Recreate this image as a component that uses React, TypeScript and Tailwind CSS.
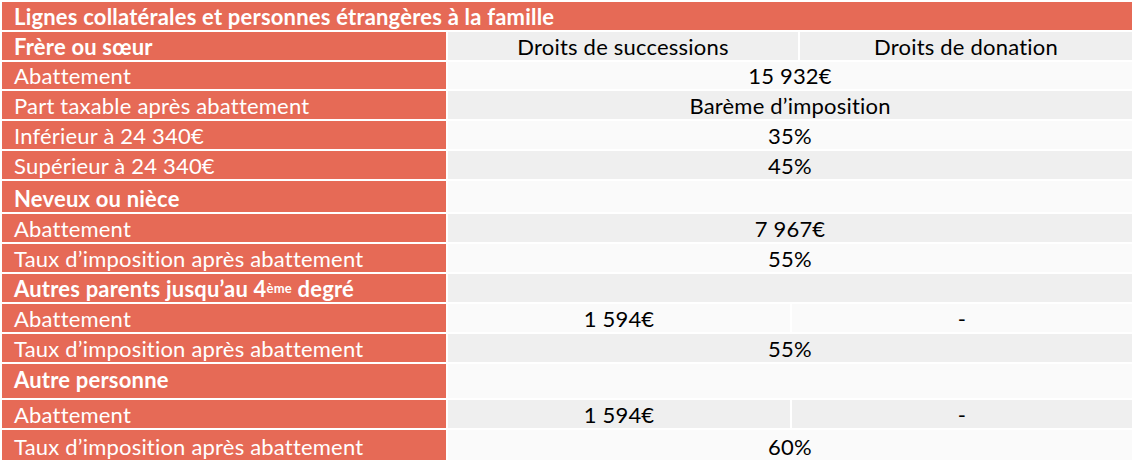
import React from "react";

type Row = {
  label: React.ReactNode;
  bold?: boolean;
  h: number;
  pb?: string;
  cells: { text?: React.ReactNode; w?: string }[];
  bg: string;
};

const G = "bg-[#efefef]";
const L = "bg-[#fafafa]";

const rows: Row[] = [
  {
    label: "Frère ou sœur",
    bold: true,
    h: 28,
    bg: G,
    cells: [
      { text: "Droits de successions", w: "w-[350px]" },
      { text: "Droits de donation", w: "flex-1" },
    ],
  },
  { label: "Abattement", h: 27, bg: L, cells: [{ text: "15 932€", w: "flex-1" }] },
  { label: "Part taxable après abattement", h: 28, bg: G, cells: [{ text: "Barème d’imposition", w: "flex-1" }] },
  { label: "Inférieur à 24 340€", h: 28, bg: L, cells: [{ text: "35%", w: "flex-1" }] },
  { label: "Supérieur à 24 340€", h: 28, bg: G, cells: [{ text: "45%", w: "flex-1" }] },
  { label: "Neveux ou nièce", bold: true, h: 31, bg: L, cells: [{ text: "", w: "flex-1" }] },
  { label: "Abattement", h: 28, bg: G, cells: [{ text: "7 967€", w: "flex-1" }] },
  { label: "Taux d’imposition après abattement", h: 28, bg: L, cells: [{ text: "55%", w: "flex-1" }] },
  {
    label: (
      <>
        Autres parents jusqu’au 4<sup className="text-[13px] relative -top-[4px]">ème</sup> degré
      </>
    ),
    bold: true,
    h: 28,
    bg: G,
    cells: [{ text: "", w: "flex-1" }],
  },
  {
    label: "Abattement",
    h: 28,
    bg: L,
    cells: [
      { text: "1 594€", w: "w-[342px]" },
      { text: "-", w: "flex-1" },
    ],
  },
  { label: "Taux d’imposition après abattement", h: 28, bg: G, cells: [{ text: "55%", w: "flex-1" }] },
  { label: "Autre personne", bold: true, h: 34, pb: "pb-[6px]", bg: L, cells: [{ text: "", w: "flex-1" }] },
  {
    label: "Abattement",
    h: 28,
    bg: G,
    cells: [
      { text: "1 594€", w: "w-[342px]" },
      { text: "-", w: "flex-1" },
    ],
  },
  { label: "Taux d’imposition après abattement", h: 30, bg: L, cells: [{ text: "60%", w: "flex-1" }] },
];

export default function App() {
  return (
    <div
      className="w-[1136px] h-[460px] overflow-hidden bg-white pt-[2px] pl-[2px]"
      style={{ fontFamily: "Lato, 'Open Sans', sans-serif" }}
    >
      <div className="w-[1130px] flex flex-col gap-[2px] text-[22px] tracking-[0.2px]">
        <div className="h-[28px] bg-[#e66a56] text-white font-bold flex items-end pl-[12px] pb-[1px] leading-[24px]">
          Lignes collatérales et personnes étrangères à la famille
        </div>
        {rows.map((r, i) => (
          <div key={i} className="flex gap-[2px]" style={{ height: r.h }}>
            <div
              className={`w-[444px] shrink-0 bg-[#e66a56] text-white flex items-end pl-[12px] leading-[24px] ${
                r.pb ?? "pb-[1px]"
              } ${r.bold ? "font-bold" : ""}`}
            >
              <span className="whitespace-nowrap">{r.label}</span>
            </div>
            {r.cells.map((c, j) => (
              <div
                key={j}
                className={`${c.w} ${r.bg} text-black flex items-end justify-center pb-[1px] leading-[24px]`}
              >
                {c.text}
              </div>
            ))}
          </div>
        ))}
      </div>
    </div>
  );
}
